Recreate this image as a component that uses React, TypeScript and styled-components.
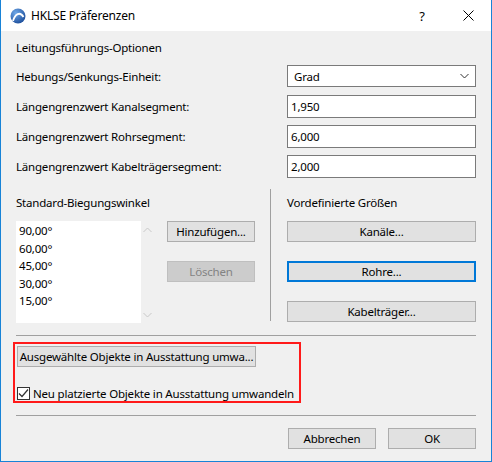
import React from "react";
import styled, { createGlobalStyle } from "styled-components";

const Global = createGlobalStyle`
  html, body { margin: 0; padding: 0; background: #f0f0f0; }
  body { font-family: "Noto Sans", "Open Sans", sans-serif; font-size: 11.5px; letter-spacing: -0.2px; color: #000; }
  * { box-sizing: border-box; }
`;

const Window = styled.div`
  width: 492px;
  height: 462px;
  background: #f0f0f0;
  border: 1px solid #1883d7;
  border-top: none;
  display: flex;
  flex-direction: column;
`;

const TitleBar = styled.div`
  height: 31px;
  background: #fff;
  display: flex;
  align-items: center;
  padding-left: 9px;
`;

const TitleText = styled.div`
  margin-left: 5px;
  font-size: 12px;
  flex: 1;
`;

const TitleButton = styled.div`
  width: 46px;
  height: 31px;
  display: flex;
  align-items: center;
  justify-content: center;
  font-size: 13px;
`;

const Body = styled.div`
  flex: 1;
  padding: 0 15px;
  display: flex;
  flex-direction: column;
`;

const Heading = styled.div`
  height: 16px;
  line-height: 16px;
  margin-top: 9px;
`;

const FieldGrid = styled.div`
  margin-top: 9px;
  display: grid;
  grid-template-columns: 1fr 189px;
  grid-auto-rows: 23px;
  row-gap: 7px;
  align-items: center;
`;

const Label = styled.div`
  line-height: 16px;
`;

const InputBox = styled.div<{ $select?: boolean }>`
  height: ${(p) => (p.$select ? "22px" : "23px")};
  align-self: ${(p) => (p.$select ? "start" : "stretch")};
  background: #fff;
  border: 1px solid #7a7a7a;
  display: flex;
  align-items: center;
  padding: 0 ${(p) => (p.$select ? "6px" : "3px")};
  justify-content: space-between;
`;

const Middle = styled.div`
  margin-top: 11px;
  display: grid;
  grid-template-columns: 239px 32px 1fr;
  height: 133px;
`;

const Column = styled.div`
  display: flex;
  flex-direction: column;
`;

const VSep = styled.div`
  width: 1px;
  background: #a0a0a0;
  margin-left: 15px;
  height: 132px;
`;

const SectionTitle = styled.div`
  height: 16px;
  line-height: 16px;
  margin-top: 6px;
`;

const ListRow = styled.div`
  margin-top: 10px;
  display: flex;
`;

const ListBox = styled.div`
  width: 125px;
  height: 102px;
  background: #fff;
  padding: 1px 0 0 3px;
  display: flex;
  flex-direction: column;
`;

const ListItem = styled.div`
  height: 17.6px;
  line-height: 17px;
`;

const ScrollCol = styled.div`
  width: 13px;
  display: flex;
  flex-direction: column;
  justify-content: space-between;
  align-items: center;
  padding: 6px 0 5px;
`;

const SideButtons = styled.div`
  margin-left: 13px;
  display: flex;
  flex-direction: column;
  gap: 19px;
  padding-top: 0;
`;

const Button = styled.div<{ $w?: number; $disabled?: boolean; $focus?: boolean; $h?: number }>`
  width: ${(p) => (p.$w ? `${p.$w}px` : "100%")};
  height: ${(p) => p.$h ?? 21}px;
  background: ${(p) => (p.$disabled ? "#cccccc" : "#e1e1e1")};
  border: ${(p) => (p.$focus ? "2px solid #0078d7" : p.$disabled ? "1px solid #bfbfbf" : "1px solid #adadad")};
  color: ${(p) => (p.$disabled ? "#838383" : "#000")};
  display: flex;
  align-items: center;
  justify-content: center;
  white-space: nowrap;
`;

const RightButtons = styled.div`
  margin-top: 10px;
  display: flex;
  flex-direction: column;
  gap: 19px;
  width: 189px;
`;

const HSep = styled.div<{ $top: number }>`
  height: 1px;
  background: #a0a0a0;
  margin-top: ${(p) => p.$top}px;
  width: 460px;
`;

const Highlight = styled.div`
  margin-top: 6px;
  margin-left: -3px;
  width: 288px;
  height: 61px;
  border: 2px solid #ff1a1a;
  padding: 2px 0 0 2px;
  display: flex;
  flex-direction: column;
`;

const CheckRow = styled.div`
  margin-top: 19px;
  display: flex;
  align-items: center;
  gap: 3px;
  height: 14px;
  white-space: nowrap;
`;

const CheckBox = styled.div`
  width: 13px;
  height: 13px;
  flex: none;
  background: #fff;
  border: 1px solid #333;
  display: flex;
  align-items: center;
  justify-content: center;
`;

const Footer = styled.div`
  margin-top: 12px;
  display: flex;
  justify-content: flex-end;
  gap: 12px;
  width: 460px;
`;

const Chevron = ({ up, color }: { up?: boolean; color: string }) => (
  <svg width="9" height="6" viewBox="0 0 9 6">
    <path d={up ? "M0.5 5 L4.5 1 L8.5 5" : "M0.5 1 L4.5 5 L8.5 1"} fill="none" stroke={color} strokeWidth="1" />
  </svg>
);

const AppIcon = () => (
  <svg width="16" height="16" viewBox="0 0 16 16">
    <defs>
      <radialGradient id="g" cx="35%" cy="30%" r="75%">
        <stop offset="0" stopColor="#6fa8e8" />
        <stop offset="1" stopColor="#1d4f9c" />
      </radialGradient>
    </defs>
    <circle cx="8" cy="8" r="7.5" fill="url(#g)" />
    <path d="M3 13 C5 6, 10 3, 13.5 9" fill="none" stroke="#fff" strokeWidth="1.8" />
  </svg>
);

export default function App() {
  const angles = ["90,00°", "60,00°", "45,00°", "30,00°", "15,00°"];
  return (
    <>
      <Global />
      <Window>
        <TitleBar>
          <AppIcon />
          <TitleText>HKLSE Präferenzen</TitleText>
          <TitleButton>?</TitleButton>
          <TitleButton>
            <svg width="11" height="11" viewBox="0 0 11 11">
              <path d="M0.5 0.5 L10.5 10.5 M10.5 0.5 L0.5 10.5" stroke="#000" strokeWidth="1" />
            </svg>
          </TitleButton>
        </TitleBar>
        <Body>
          <Heading>Leitungsführungs-Optionen</Heading>
          <FieldGrid>
            <Label>Hebungs/Senkungs-Einheit:</Label>
            <InputBox $select>
              <span>Grad</span>
              <Chevron color="#333" />
            </InputBox>
            <Label>Längengrenzwert Kanalsegment:</Label>
            <InputBox>1,950</InputBox>
            <Label>Längengrenzwert Rohrsegment:</Label>
            <InputBox>6,000</InputBox>
            <Label>Längengrenzwert Kabelträgersegment:</Label>
            <InputBox>2,000</InputBox>
          </FieldGrid>
          <Middle>
            <Column>
              <SectionTitle>Standard-Biegungswinkel</SectionTitle>
              <ListRow>
                <ListBox>
                  {angles.map((a) => (
                    <ListItem key={a}>{a}</ListItem>
                  ))}
                </ListBox>
                <ScrollCol>
                  <Chevron up color="#c8c8c8" />
                  <Chevron color="#c8c8c8" />
                </ScrollCol>
                <SideButtons>
                  <Button $w={88} $h={21}>Hinzufügen...</Button>
                  <Button $w={88} $h={21} $disabled>Löschen</Button>
                </SideButtons>
              </ListRow>
            </Column>
            <VSep />
            <Column>
              <SectionTitle>Vordefinierte Größen</SectionTitle>
              <RightButtons>
                <Button>Kanäle...</Button>
                <Button $focus>Rohre...</Button>
                <Button>Kabelträger...</Button>
              </RightButtons>
            </Column>
          </Middle>
          <HSep $top={13} />
          <Highlight>
            <Button $w={239} $h={21}>Ausgewählte Objekte in Ausstattung umwa...</Button>
            <CheckRow>
              <CheckBox>
                <svg width="11" height="11" viewBox="0 0 11 11">
                  <path d="M1 5.5 L4 8.5 L10 1.5" fill="none" stroke="#333" strokeWidth="1.2" />
                </svg>
              </CheckBox>
              <span>Neu platzierte Objekte in Ausstattung umwandeln</span>
            </CheckRow>
          </Highlight>
          <HSep $top={12} />
          <Footer>
            <Button $w={88}>Abbrechen</Button>
            <Button $w={88}>OK</Button>
          </Footer>
        </Body>
      </Window>
    </>
  );
}
